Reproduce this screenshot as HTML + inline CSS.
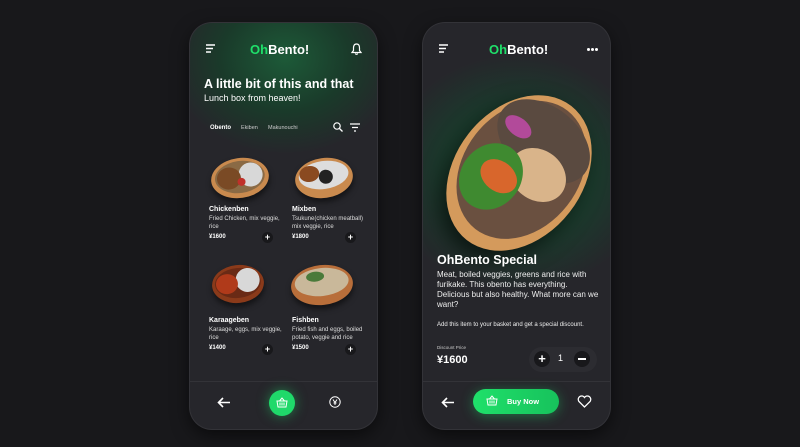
<!DOCTYPE html>
<html><head><style>
*{margin:0;padding:0;box-sizing:border-box}
body{width:800px;height:447px;background:#18181b;font-family:"Liberation Sans",sans-serif;color:#fff;position:relative;overflow:hidden}
.ph{position:absolute;top:23px;width:187px;height:406px;border-radius:22px;background:#26262b;overflow:hidden;box-shadow:0 0 0 1px #333338,0 6px 18px rgba(0,0,0,.6)}
.a{position:absolute}
.logo{font-weight:bold;font-size:13px}
.logo span{color:#1fe06a}
.t{font-size:6px;color:#ddd;line-height:8px}
.n{font-size:7px;font-weight:bold}
.pr{font-size:6px;font-weight:bold}
.plus{width:11px;height:11px;border-radius:50%;background:#18181b;font-size:9px;line-height:11px;text-align:center;font-weight:bold}
.box{position:absolute;border-radius:50%;background:#c98a4e;box-shadow:0 4px 6px rgba(0,0,0,.5)}
.box i{position:absolute;border-radius:50%}
.dot{position:absolute;width:3px;height:3px;border-radius:50%;background:#fff}
</style></head><body>
<!-- phone 1 -->
<div class="ph" style="left:190px">
 <div class="a" style="left:-20px;top:-60px;width:230px;height:190px;border-radius:50%;background:radial-gradient(ellipse at center,#1d5a38 0%,#1a3a2a 40%,rgba(38,38,43,0) 72%)"></div>
 <svg class="a" style="left:16px;top:21px" width="10" height="9"><path d="M0 1H9M0 4.5H7M0 8H5" stroke="#fff" stroke-width="1.4"/></svg>
 <div class="a logo" style="left:60px;top:19px"><span>Oh</span>Bento!</div>
 <svg class="a" style="left:161px;top:20px" width="11" height="12"><path d="M5.5 1C3 1 2.5 3 2.5 5V7.5L1 9.5H10L8.5 7.5V5C8.5 3 8 1 5.5 1ZM4.3 10.5a1.3 1.3 0 0 0 2.4 0" stroke="#fff" stroke-width="1.2" fill="none"/></svg>
 <div class="a" style="left:14px;top:54px;font-size:12.5px;font-weight:bold">A little bit of this and that</div>
 <div class="a" style="left:14px;top:70px;font-size:9px">Lunch box from heaven!</div>
 <div class="a" style="left:20px;top:102px;font-size:6px;font-weight:bold">Obento</div>
 <div class="a" style="left:51px;top:102px;font-size:5.5px;color:#ccc">Ekiben</div>
 <div class="a" style="left:78px;top:102px;font-size:5.5px;color:#ccc">Makunouchi</div>
 <svg class="a" style="left:143px;top:99px" width="10" height="10"><circle cx="4" cy="4" r="3.2" stroke="#fff" stroke-width="1.2" fill="none"/><path d="M6.5 6.5L9.5 9.5" stroke="#fff" stroke-width="1.3"/></svg>
 <svg class="a" style="left:160px;top:100px" width="10" height="9"><path d="M0 1H10M2 4.5H8M4 8H6" stroke="#fff" stroke-width="1.3"/></svg>
 <div class="box" style="left:21px;top:135px;width:58px;height:40px;transform:rotate(-8deg)"><i style="left:4px;top:3px;width:50px;height:32px;background:#8a6a45"></i><i style="left:28px;top:6px;width:24px;height:24px;background:#d8d8d8"></i><i style="left:6px;top:8px;width:24px;height:22px;background:#7a4a25"></i><i style="left:26px;top:20px;width:8px;height:8px;background:#c0302a"></i></div>
 <div class="box" style="left:105px;top:135px;width:58px;height:40px;transform:rotate(-8deg)"><i style="left:4px;top:3px;width:50px;height:28px;background:#ddd"></i><i style="left:5px;top:6px;width:20px;height:16px;background:#8a4a20"></i><i style="left:24px;top:12px;width:14px;height:14px;background:#222"></i></div>
 <div class="a n" style="left:19px;top:183px">Chickenben</div>
 <div class="a t" style="left:19px;top:192px">Fried Chicken, mix veggie,<br>rice</div>
 <div class="a pr" style="left:19px;top:211px">¥1600</div>
 <div class="a plus" style="left:72px;top:209px">+</div>
 <div class="a n" style="left:102px;top:183px">Mixben</div>
 <div class="a t" style="left:102px;top:192px">Tsukune(chicken meatball)<br>mix veggie, rice</div>
 <div class="a pr" style="left:102px;top:211px">¥1800</div>
 <div class="a plus" style="left:155px;top:209px">+</div>
 <div class="box" style="left:22px;top:242px;width:52px;height:38px;background:#8a3a1a;transform:rotate(-6deg)"><i style="left:3px;top:3px;width:46px;height:30px;background:#6a2a15"></i><i style="left:24px;top:4px;width:24px;height:24px;background:#d8d8d8"></i><i style="left:4px;top:8px;width:22px;height:20px;background:#b03a1a"></i></div>
 <div class="box" style="left:101px;top:242px;width:62px;height:40px;background:#b86e3a;transform:rotate(-6deg)"><i style="left:4px;top:3px;width:54px;height:28px;background:#c9b89a"></i><i style="left:16px;top:6px;width:18px;height:10px;background:#4a7a3a"></i></div>
 <div class="a n" style="left:19px;top:294px">Karaageben</div>
 <div class="a t" style="left:19px;top:303px">Karaage, eggs, mix veggie,<br>rice</div>
 <div class="a pr" style="left:19px;top:322px">¥1400</div>
 <div class="a plus" style="left:72px;top:321px">+</div>
 <div class="a n" style="left:102px;top:294px">Fishben</div>
 <div class="a t" style="left:102px;top:303px">Fried fish and eggs, boiled<br>potato, veggie and rice</div>
 <div class="a pr" style="left:102px;top:322px">¥1500</div>
 <div class="a plus" style="left:155px;top:321px">+</div>
 <div class="a" style="left:0;top:358px;width:187px;height:1px;background:#333338"></div>
 <svg class="a" style="left:27px;top:374px" width="14" height="11"><path d="M13 5.5H2M6 1L1.5 5.5L6 10" stroke="#fff" stroke-width="1.6" fill="none"/></svg>
 <div class="a" style="left:79px;top:367px;width:26px;height:26px;border-radius:50%;background:#1fd96a;box-shadow:0 0 12px rgba(31,217,106,.5)"></div>
 <svg class="a" style="left:86px;top:374px" width="12" height="11"><path d="M1 4H11L10 10H2ZM3.5 4L6 1L8.5 4M4 5.5V8.5M6 5.5V8.5M8 5.5V8.5" stroke="#fff" stroke-width="1" fill="none"/></svg>
 <svg class="a" style="left:139px;top:373px" width="12" height="12"><circle cx="6" cy="6" r="5.2" stroke="#fff" stroke-width="1" fill="none"/><path d="M4 3.5L6 6.5L8 3.5M6 6.5V9M4.5 7H7.5" stroke="#fff" stroke-width="1" fill="none"/></svg>
</div>

<!-- phone 2 -->
<div class="ph" style="left:423px">
 <div class="a" style="left:-40px;top:30px;width:270px;height:240px;border-radius:50%;background:radial-gradient(ellipse at center,#1d5a3a 0%,#1b3a2c 40%,rgba(38,38,43,0) 70%)"></div>
 <svg class="a" style="left:16px;top:21px" width="10" height="9"><path d="M0 1H9M0 4.5H7M0 8H5" stroke="#fff" stroke-width="1.4"/></svg>
 <div class="a logo" style="left:66px;top:19px"><span>Oh</span>Bento!</div>
 <div class="dot" style="left:164px;top:25px"></div><div class="dot" style="left:168px;top:25px"></div><div class="dot" style="left:172px;top:25px"></div>
 <div class="box" style="left:32px;top:65px;width:128px;height:170px;transform:rotate(38deg);background:#d49a5c;box-shadow:0 10px 20px rgba(0,0,0,.6)">
  <i style="left:6px;top:6px;width:116px;height:150px;background:#6a5040"></i>
  <i style="left:12px;top:10px;width:104px;height:70px;background:#5a4a40"></i>
  <i style="left:50px;top:50px;width:60px;height:50px;background:#d9b48a"></i>
  <i style="left:14px;top:70px;width:60px;height:70px;background:#3f8a30"></i>
  <i style="left:30px;top:85px;width:40px;height:30px;background:#d8662c"></i>
  <i style="left:20px;top:40px;width:30px;height:18px;background:#b24a9a"></i>
 </div>
 <div class="a" style="left:14px;top:230px;font-size:12.5px;font-weight:bold">OhBento Special</div>
 <div class="a" style="left:14px;top:247px;width:162px;font-size:8px;line-height:10px;color:#eee">Meat, boiled veggies, greens and rice with furikake. This obento has everything. Delicious but also healthy. What more can we want?</div>
 <div class="a" style="left:14px;top:299px;font-size:6px;color:#eee">Add this item to your basket and get a special discount.</div>
 <div class="a" style="left:14px;top:322px;font-size:4.5px;color:#ccc">Discount Price</div>
 <div class="a" style="left:14px;top:331px;font-size:11px;font-weight:bold">¥1600</div>
 <div class="a" style="left:106px;top:324px;width:68px;height:25px;border-radius:13px;background:#2c2c31"></div>
 <div class="a" style="left:111px;top:328px;width:16px;height:16px;border-radius:50%;background:#18181b;font-size:13px;line-height:16px;text-align:center;font-weight:bold">+</div>
 <div class="a" style="left:135px;top:330px;font-size:9px">1</div>
 <div class="a" style="left:151px;top:328px;width:16px;height:16px;border-radius:50%;background:#18181b;"><div style="position:absolute;left:4px;top:7px;width:8px;height:2px;background:#fff"></div></div>
 <div class="a" style="left:0;top:358px;width:187px;height:1px;background:#333338"></div>
 <svg class="a" style="left:18px;top:374px" width="14" height="11"><path d="M13 5.5H2M6 1L1.5 5.5L6 10" stroke="#fff" stroke-width="1.6" fill="none"/></svg>
 <div class="a" style="left:50px;top:366px;width:86px;height:25px;border-radius:13px;background:linear-gradient(90deg,#1fe06a,#17c25c);box-shadow:0 2px 12px rgba(31,217,106,.4)"></div>
 <svg class="a" style="left:63px;top:372px" width="12" height="11"><path d="M1 4H11L10 10H2ZM3.5 4L6 1L8.5 4M4 5.5V8.5M6 5.5V8.5M8 5.5V8.5" stroke="#fff" stroke-width="1" fill="none"/></svg>
 <div class="a" style="left:84px;top:374px;font-size:7.5px;font-weight:bold">Buy Now</div>
 <svg class="a" style="left:154px;top:372px" width="15" height="13"><path d="M7.5 12L1.8 6.3A3.2 3.2 0 0 1 7.5 2.5A3.2 3.2 0 0 1 13.2 6.3Z" stroke="#fff" stroke-width="1.3" fill="none"/></svg>
</div>
</body></html>
